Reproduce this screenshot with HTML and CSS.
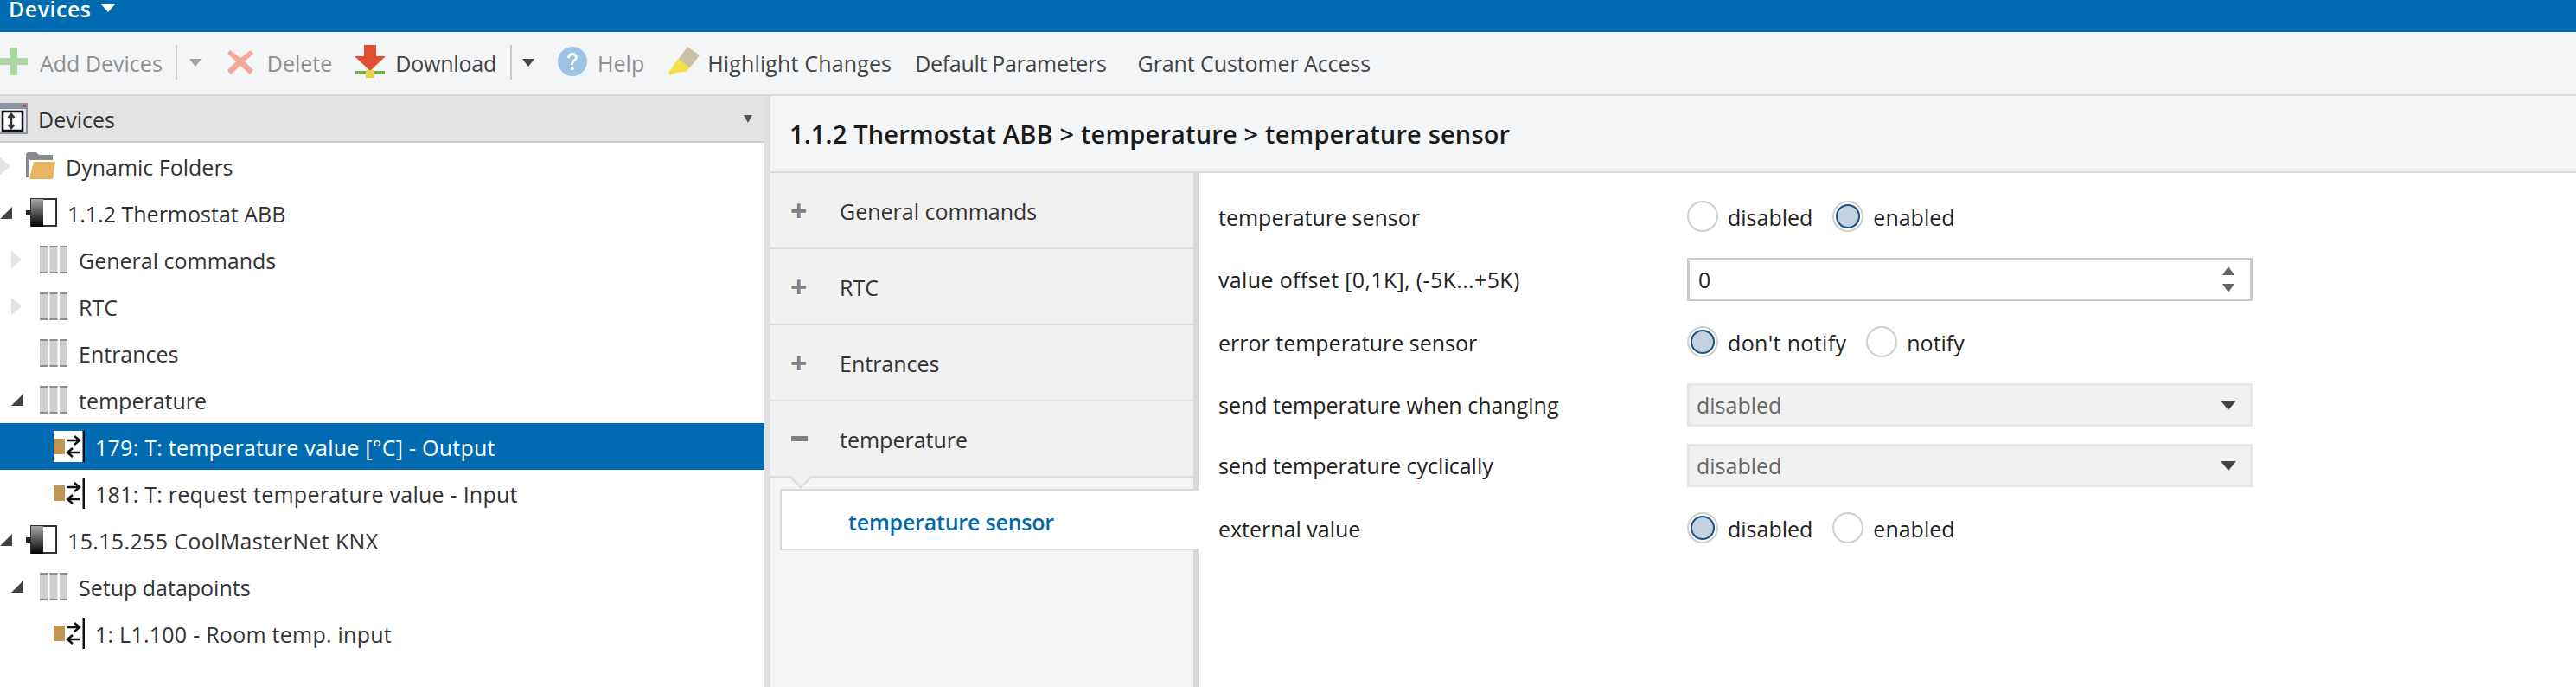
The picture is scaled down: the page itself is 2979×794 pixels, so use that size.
FILE: index.html
```html
<!DOCTYPE html>
<html lang="en">
<head>
  <meta charset="UTF-8" />
  <title>Devices</title>
  <link rel="stylesheet" href="styles.css">
</head>
<body>
  <svg class="defs" aria-hidden="true">
    <defs>
      <linearGradient id="devGrad" x1="0" y1="0" x2="0" y2="1">
        <stop offset="0" stop-color="#a8a8a8" />
        <stop offset="1" stop-color="#000" />
      </linearGradient>
      <symbol id="i-device" viewBox="0 0 36 34">
        <rect x="0" y="14" width="6" height="6" fill="#222" />
        <rect x="6" y="1" width="29" height="31" fill="#fff" stroke="#333" stroke-width="2" />
        <rect x="6" y="1" width="14" height="32" fill="url(#devGrad)" />
      </symbol>
      <symbol id="i-block" viewBox="0 0 32 32">
        <path d="M0 0h9v32H0zM11.500 0h9v32h-9zM23 0h9v32h-9z" fill="#cfcfcf" />
        <path d="M0 0h9v2H0zM11.500 0h9v2h-9zM23 0h9v2h-9zM0 30h9v2H0zM11.500 30h9v2h-9zM23 30h9v2h-9z" fill="#8c8c8c" />
      </symbol>
      <symbol id="i-point" viewBox="0 0 36 36">
        <rect x="0" y="9" width="13" height="18" fill="#c39555" />
        <path d="M15 11h14M24 6l6 5-6 5M31 25H17M22 20l-6 5 6 5" fill="none" stroke="#111" stroke-width="2.500" />
        <rect x="33.500" y="0" width="2.500" height="36" fill="#111" />
      </symbol>
    </defs>
  </svg>

  <header class="topbar">
    <span class="topbar-title">Devices</span>
    <span class="caret caret-white"></span>
  </header>

  <nav class="toolbar">
    <div class="tool off t-add">
      <svg width="32" height="32" viewBox="0 0 32 32"><path d="M12 0h8v12h12v8H20v12h-8V20H0v-8h12z" fill="#aed6a0" /></svg>
      <span>Add Devices</span>
    </div>
    <span class="tool-sep"></span>
    <span class="caret caret-off"></span>
    <div class="tool off t-delete">
      <svg width="30" height="32" viewBox="0 0 30 32"><path d="M3 3l12 9 12-9 3 4-10 9 10 10-4 5-11-10L4 31 0 26l10-10L0 7z" fill="#efaa9c" /></svg>
      <span>Delete</span>
    </div>
    <div class="tool t-download">
      <svg width="36" height="38" viewBox="0 0 36 38"><path d="M11 0h14v13h11L18 30 0 13h11z" fill="#e24e2e" /><rect x="1" y="30" width="34" height="4" fill="#6fb246" /><rect x="13" y="29" width="10" height="9" fill="#e8d24b" /></svg>
      <span>Download</span>
    </div>
    <span class="tool-sep sep-dl"></span>
    <span class="caret caret-dark"></span>
    <div class="tool off t-help">
      <svg width="34" height="34" viewBox="0 0 34 34"><circle cx="17" cy="17" r="17" fill="#9cc3e6" /><path d="M11 13c0-4 3-6 6-6s6 2 6 5c0 4-5 4-5 9h-3c0-6 5-6 5-9 0-1-1-2-3-2s-3 1-3 3z" fill="#fff" /><rect x="15" y="23" width="3.500" height="4" fill="#fff" /></svg>
      <span>Help</span>
    </div>
    <div class="tool t-highlight">
      <svg width="36" height="34" viewBox="0 0 36 34"><path d="M22 0l14 10-11 14-14-9z" fill="#c9c2a4" /><path d="M11 14l14 10-5 5-11 1-7 3-2-3 5-7z" fill="#f1e24a" /></svg>
      <span>Highlight Changes</span>
    </div>
    <div class="tool t-default"><span>Default Parameters</span></div>
    <div class="tool t-grant"><span>Grant Customer Access</span></div>
  </nav>

  <main class="main">
    <aside class="devices">
      <div class="devices-head">
        <svg width="32" height="36" viewBox="0 0 32 36">
          <rect width="32" height="36" fill="#8a94a3" />
          <rect x="0" y="7" width="30" height="27" fill="#e8e8e8" />
          <rect x="3" y="10" width="23" height="22" fill="#fff" stroke="#111" stroke-width="2.500" />
          <path d="M13 13v16M9.500 17l3.500-4 3.500 4M9.500 25l3.500 4 3.500-4" fill="none" stroke="#333" stroke-width="2.500" />
          <rect x="27" y="2" width="3" height="2.500" fill="#c8392e" />
        </svg>
        <span class="row-text">Devices</span>
        <span class="caret caret-small"></span>
      </div>
      <ul class="tree">
        <li class="row lvl0">
          <span class="exp"><span class="tri-open"></span></span>
          <svg class="ico" width="34" height="32" viewBox="0 0 34 32"><path d="M0 2l2-2h10l3 3h16v6H4v20H0z" fill="#8a8a8a" /><path d="M9 11h25l-3 20H4z" fill="#eab562" /></svg>
          <span class="row-text">Dynamic Folders</span>
        </li>
        <li class="row lvl0">
          <span class="exp"><span class="tri-down"></span></span>
          <svg class="ico" width="36" height="34"><use href="#i-device" /></svg>
          <span class="row-text">1.1.2 Thermostat ABB</span>
        </li>
        <li class="row lvl1">
          <span class="exp"><span class="tri-open"></span></span>
          <svg class="ico" width="32" height="32"><use href="#i-block" /></svg>
          <span class="row-text">General commands</span>
        </li>
        <li class="row lvl1">
          <span class="exp"><span class="tri-open"></span></span>
          <svg class="ico" width="32" height="32"><use href="#i-block" /></svg>
          <span class="row-text">RTC</span>
        </li>
        <li class="row lvl1">
          <span class="exp"></span>
          <svg class="ico" width="32" height="32"><use href="#i-block" /></svg>
          <span class="row-text">Entrances</span>
        </li>
        <li class="row lvl1">
          <span class="exp"><span class="tri-down"></span></span>
          <svg class="ico" width="32" height="32"><use href="#i-block" /></svg>
          <span class="row-text">temperature</span>
        </li>
        <li class="row lvl2 selected">
          <svg class="ico" width="36" height="36"><use href="#i-point" /></svg>
          <span class="row-text">179: T: temperature value [°C] - Output</span>
        </li>
        <li class="row lvl2">
          <svg class="ico" width="36" height="36"><use href="#i-point" /></svg>
          <span class="row-text">181: T: request temperature value - Input</span>
        </li>
        <li class="row lvl0">
          <span class="exp"><span class="tri-down"></span></span>
          <svg class="ico" width="36" height="34"><use href="#i-device" /></svg>
          <span class="row-text wide">15.15.255 CoolMasterNet KNX</span>
        </li>
        <li class="row lvl1">
          <span class="exp"><span class="tri-down"></span></span>
          <svg class="ico" width="32" height="32"><use href="#i-block" /></svg>
          <span class="row-text">Setup datapoints</span>
        </li>
        <li class="row lvl2">
          <svg class="ico" width="36" height="36"><use href="#i-point" /></svg>
          <span class="row-text">1: L1.100 - Room temp. input</span>
        </li>
      </ul>
    </aside>

    <section class="detail">
      <h1 class="crumb">1.1.2 Thermostat ABB &gt; temperature &gt; temperature sensor</h1>
      <div class="detail-body">
        <div class="groups">
          <div class="group"><span class="sign">+</span><span class="row-text">General commands</span></div>
          <div class="group"><span class="sign">+</span><span class="row-text">RTC</span></div>
          <div class="group"><span class="sign">+</span><span class="row-text">Entrances</span></div>
          <div class="group open"><span class="sign minus"></span><span class="row-text">temperature</span></div>
          <div class="sub-active">temperature sensor</div>
        </div>
        <div class="params">
          <div class="param">
            <span class="param-label">temperature sensor</span>
            <div class="radios">
              <span class="radio"></span><span class="radio-text">disabled</span>
              <span class="radio on"></span><span class="radio-text">enabled</span>
            </div>
          </div>
          <div class="param param-field">
            <span class="param-label wide">value offset [0,1K], (-5K...+5K)</span>
            <div class="spinner">
              <span>0</span>
              <div class="spin-btns"><span class="spin-up"></span><span class="spin-down"></span></div>
            </div>
          </div>
          <div class="param">
            <span class="param-label">error temperature sensor</span>
            <div class="radios">
              <span class="radio on"></span><span class="radio-text wide">don't notify</span>
              <span class="radio"></span><span class="radio-text">notify</span>
            </div>
          </div>
          <div class="param param-field">
            <span class="param-label">send temperature when changing</span>
            <div class="combo"><span>disabled</span><span class="combo-arrow"></span></div>
          </div>
          <div class="param param-field">
            <span class="param-label">send temperature cyclically</span>
            <div class="combo"><span>disabled</span><span class="combo-arrow"></span></div>
          </div>
          <div class="param">
            <span class="param-label">external value</span>
            <div class="radios">
              <span class="radio on"></span><span class="radio-text">disabled</span>
              <span class="radio"></span><span class="radio-text">enabled</span>
            </div>
          </div>
        </div>
      </div>
    </section>
  </main>
</body>
</html>
```

FILE: styles.css
```css
* {
  box-sizing: border-box;
}
html, body {
  margin: 0;
  height: 794px;
  overflow: hidden;
}
body {
  font-family: "Open Sans", "Noto Sans", sans-serif;
  font-size: 25px;
  color: #333;
  background: #fff;
}
.defs {
  width: 0;
  height: 0;
  display: block;
}
.wide {
  letter-spacing: 0.35px;
}

/* top blue bar */
.topbar {
  height: 37px;
  background: #006bb1;
  color: #fff;
  font-weight: 600;
  display: flex;
  padding-left: 10px;
  overflow: hidden;
}
.topbar-title {
  line-height: 20px;
  height: 24px;
  letter-spacing: 0.5px;
}
.caret {
  display: block;
  width: 0;
  height: 0;
  border-left: 7px solid transparent;
  border-right: 7px solid transparent;
  border-top: 9px solid #555;
}
.caret-white {
  border-top-color: #fff;
  border-left-width: 8px;
  border-right-width: 8px;
  margin: 5px 0 0 11px;
}
.caret-off {
  border-top-color: #a5a5a5;
  margin: -2px 0 0 14px;
}
.caret-dark {
  border-top-color: #444;
  margin: -2px 0 0 12px;
}
.caret-small {
  border-left-width: 5px;
  border-right-width: 5px;
  margin-left: auto;
  margin-right: 14px;
}

/* toolbar */
.toolbar {
  height: 74px;
  background: #f4f5f7;
  border-bottom: 2px solid #d8d9db;
  display: flex;
  align-items: center;
  white-space: nowrap;
}
.tool {
  display: flex;
  align-items: center;
  gap: 14px;
  color: #444;
}
.tool svg {
  margin-top: -4px;
}
.tool.off {
  color: #8f8f8f;
}
.tool-sep {
  width: 2px;
  height: 40px;
  background: #c9c9c9;
  margin: -2px 0 0 15px;
}
.sep-dl { margin-left: 16px; }
.t-delete { margin-left: 30px; gap: 16px; }
.t-download { margin-left: 26px; gap: 11px; letter-spacing: -0.2px; }
.t-help { margin-left: 27px; gap: 12px; }
.t-highlight { margin-left: 28px; gap: 9px; letter-spacing: 0.15px; }
.t-default { margin-left: 27px; letter-spacing: -0.3px; }
.t-grant { margin-left: 36px; letter-spacing: -0.1px; }

/* main area */
.main {
  display: flex;
  height: 683px;
}
.devices {
  width: 884px;
  flex: none;
}
.devices-head {
  height: 54px;
  background: #e3e3e3;
  border-bottom: 2px solid #cbcbcb;
  display: flex;
  align-items: center;
  gap: 12px;
}
.tree {
  list-style: none;
  margin: 0;
  padding: 0;
}
.row {
  height: 54px;
  display: flex;
  align-items: center;
  white-space: nowrap;
}
.row-text {
  padding-top: 2px;
}
.row .ico {
  flex: none;
  margin-right: 12px;
}
.lvl0 .exp { width: 30px; }
.lvl1 { padding-left: 13px; }
.lvl1 .exp { width: 33px; }
.lvl1 .ico { margin-right: 13px; }
.lvl2 { padding-left: 62px; letter-spacing: 0.25px; }
.exp {
  flex: none;
  display: flex;
  align-items: center;
}
.tri-open {
  width: 0;
  height: 0;
  border-top: 10px solid transparent;
  border-bottom: 10px solid transparent;
  border-left: 12px solid #e2e2e2;
}
.tri-down {
  width: 0;
  height: 0;
  border-left: 14px solid transparent;
  border-bottom: 14px solid #444;
}
.selected {
  background: #006bb1;
  color: #fff;
}
.selected .ico {
  background: #fff;
}

/* right side */
.detail {
  flex: 1;
  border-left: 7px solid #e0e0e2;
  display: flex;
  flex-direction: column;
}
.crumb {
  margin: 0;
  height: 89px;
  padding: 0 0 0 22px;
  background: #f4f5f7;
  border-bottom: 2px solid #d8d9db;
  font-size: 29px;
  font-weight: 600;
  letter-spacing: 0.17px;
  color: #1a1a1a;
  line-height: 87px;
  white-space: nowrap;
}
.detail-body {
  flex: 1;
  display: flex;
}
.groups {
  width: 495px;
  flex: none;
  background: #f4f5f7;
  border-right: 6px solid #d8d9db;
}
.group {
  height: 88px;
  background: #f1f1f1;
  border-bottom: 2px solid #dcdcde;
  display: flex;
  align-items: center;
  color: #333;
  position: relative;
}
.sign {
  width: 80px;
  padding-left: 23px;
  font-size: 34px;
  font-weight: 700;
  color: #808080;
  line-height: 34px;
}
.sign.minus {
  height: 6px;
  margin-left: 24px;
  width: 56px;
  padding: 0;
  background: linear-gradient(to right, #808080 19px, transparent 19px);
}
.group.open::after {
  content: "";
  position: absolute;
  left: 26px;
  bottom: -11px;
  width: 16px;
  height: 16px;
  background: #f1f1f1;
  border-right: 2px solid #dcdcde;
  border-bottom: 2px solid #dcdcde;
  transform: rotate(45deg);
}
.sub-active {
  position: relative;
  height: 71px;
  margin: 13px -6px 0 11px;
  padding-left: 77px;
  background: #fff;
  border: 2px solid #d8d9db;
  border-right: none;
  color: #0068ad;
  font-weight: 600;
  letter-spacing: -0.2px;
  line-height: 73px;
  white-space: nowrap;
}

/* parameter list */
.params {
  flex: 1;
  padding: 3px 0 0 23px;
  color: #222;
}
.param {
  display: flex;
  align-items: center;
  margin-top: 28px;
}
.param-field {
  margin-top: 30px;
}
.param-field + .param-field {
  margin-top: 20px;
}
.param-label {
  width: 542px;
  flex: none;
  padding-top: 3px;
}
.param-field .param-label {
  padding-top: 0;
}
.radios {
  display: flex;
  align-items: center;
  height: 36px;
}
.radio {
  width: 36px;
  height: 36px;
  border: 2px solid #cfcfcf;
  border-radius: 50%;
  background: #fff;
  flex: none;
  display: flex;
  align-items: center;
  justify-content: center;
}
.radio.on::before {
  content: "";
  width: 24px;
  height: 24px;
  border-radius: 50%;
  border: 2px solid #1b4f80;
  background: #c2d2e0;
}
.radio-text {
  margin: 0 23px 0 11px;
  padding-top: 3px;
}
.spinner, .combo {
  width: 654px;
  height: 50px;
  display: flex;
  align-items: center;
  justify-content: space-between;
}
.spinner {
  border: 3px solid #cacaca;
  padding: 0 18px 0 10px;
}
.spin-btns {
  display: flex;
  flex-direction: column;
  gap: 10px;
}
.spin-up, .spin-down {
  display: block;
  width: 0;
  height: 0;
  border-left: 7px solid transparent;
  border-right: 7px solid transparent;
}
.spin-up { border-bottom: 10px solid #666; }
.spin-down { border-top: 10px solid #666; }
.combo {
  background: #f1f1f1;
  border: 3px solid #e6e6e6;
  color: #666;
  padding: 0 16px 0 8px;
}
.combo-arrow {
  display: block;
  width: 0;
  height: 0;
  border-left: 9px solid transparent;
  border-right: 9px solid transparent;
  border-top: 11px solid #444;
}
```
